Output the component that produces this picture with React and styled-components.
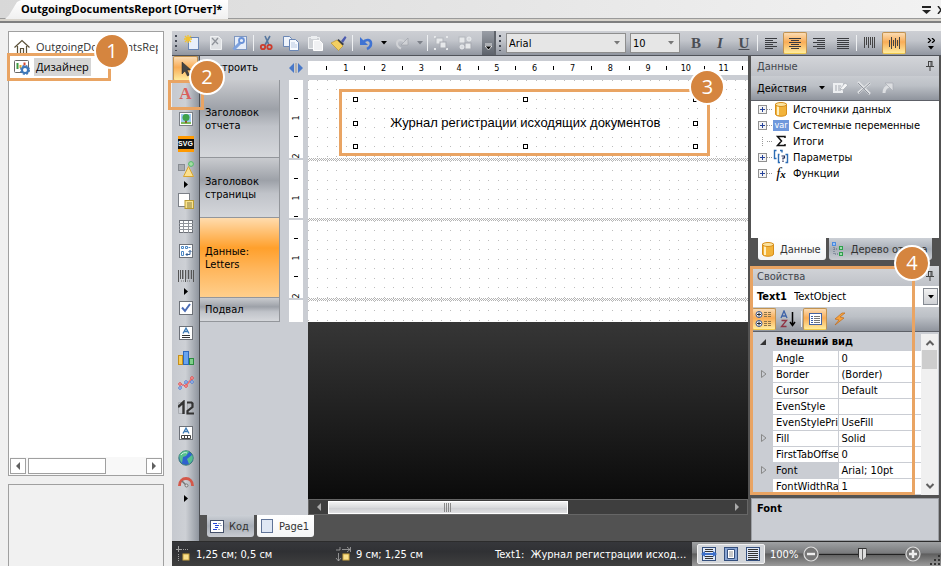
import styled, { createGlobalStyle, css } from "styled-components";

const orange = "#e9a463";
const chrome = "#cacdd3";

const GlobalStyle = createGlobalStyle`
  * {
    box-sizing: border-box;
  }
  body {
    margin: 0;
    background: #f0f0f0;
    color: #000;
    font-family: "DejaVu Sans Condensed", Tahoma, sans-serif;
    font-size: 11px;
    line-height: 13px;
  }
  button, select, input {
    font: inherit;
    color: inherit;
    margin: 0;
  }
  button {
    padding: 0;
    border: 0;
    background: none;
  }
  ul {
    list-style: none;
    margin: 0;
    padding: 0;
  }
  svg {
    display: block;
    flex: none;
  }
`;

const Icon = ({ w = 16, h = 16, children }) => (
  <svg width={w} height={h} viewBox={`0 0 ${w} ${h}`} fill="none" aria-hidden="true">
    {children}
  </svg>
);

/* ---------- icons ---------- */

const DropArrow = ({ color = "#000" }) => (
  <Icon w={6} h={4}>
    <path d="M0 0h6L3 3.500z" fill={color} />
  </Icon>
);
const RightArrow = () => (
  <Icon w={4} h={7}>
    <path d="M0 0l4 3.500L0 7z" fill="#000" />
  </Icon>
);
const NewIcon = () => (
  <Icon>
    <rect x="4.500" y="2.500" width="10" height="12" fill="#e9effa" stroke="#6b87b5" />
    <path d="M4 0v8M0 4h8M1 1l6 6M7 1L1 7" stroke="#f2c230" strokeWidth="1.300" />
  </Icon>
);
const DeletePageIcon = () => (
  <Icon>
    <path d="M2.500 1.500h8l3 3v10h-11z" fill="#dfe1e4" stroke="#eef0f2" />
    <path d="M4 3l6 6M10 3l-6 7" stroke="#8f939a" strokeWidth="1.300" />
  </Icon>
);
const WrenchIcon = () => (
  <Icon>
    <rect x="2.500" y="1.500" width="12" height="13" fill="#e6edf8" stroke="#7f97c0" />
    <path d="M1.500 14.500L8 8" stroke="#7da2df" strokeWidth="3" />
    <circle cx="9.500" cy="5.500" r="2.500" stroke="#6a92d8" strokeWidth="1.800" />
  </Icon>
);
const CutIcon = () => (
  <Icon>
    <path d="M11 1L6 10M6 1l4 9" stroke="#56779f" strokeWidth="1.600" />
    <circle cx="4" cy="12" r="2.200" stroke="#cc3b2c" strokeWidth="1.800" />
    <circle cx="10.500" cy="12" r="2.200" stroke="#cc3b2c" strokeWidth="1.800" />
  </Icon>
);
const CopyIcon = () => (
  <Icon>
    <path d="M.5 1.500h6l2 2v8h-8z" fill="#eef3fb" stroke="#6b87b5" />
    <path d="M6.500 4.500h6l3 3v8h-9z" fill="#f6f9fe" stroke="#6b87b5" />
    <path d="M8 8h4M8 10h6M8 12h6" stroke="#b9c9e2" />
  </Icon>
);
const PasteIcon = () => (
  <Icon>
    <path d="M1.500 2.500h11v11h-11z" fill="#cfd2d6" stroke="#eceef0" />
    <rect x="4" y="1" width="6" height="3" fill="#eceef0" />
    <path d="M6.500 5.500h6l3 3v7h-9z" fill="#f0f1f3" stroke="#fff" />
  </Icon>
);
const BrushIcon = () => (
  <Icon>
    <path d="M10 6l4-5 1.500 1.500L12 8z" fill="#4d5bb0" />
    <path d="M7.500 4l5.500 5-1.500 1.500-5.500-5z" fill="#3b3f4a" />
    <path d="M6 5l6 6-4.500 4.500L0 8z" fill="#f3cf62" stroke="#b58c22" strokeWidth=".6" />
  </Icon>
);
const UndoIcon = () => (
  <Icon>
    <path d="M5 7.500c3-4 8-3 8 1 0 3-2 4.500-4 5.500" stroke="#3f73d3" strokeWidth="2.600" />
    <path d="M2 2v8h8z" fill="#3f73d3" />
  </Icon>
);
const RedoIcon = () => (
  <Icon>
    <path d="M11 7.500c-3-4-8-3-8 1 0 3 2 4 4 5" stroke="#d0d2d6" strokeWidth="2" />
    <path d="M14 3v7H7z" fill="#d0d2d6" stroke="#9a9ea6" strokeWidth=".6" />
  </Icon>
);
const GroupIcon = () => (
  <Icon>
    <path d="M1 1h2v2H1zM13 1h2v2h-2zM1 13h2v2H1zM13 13h2v2h-2z" fill="#e6e8ea" />
    <rect x="3" y="3" width="7" height="6" fill="#e6e8ea" stroke="#b4b7bd" />
    <rect x="7" y="7" width="6" height="6" fill="#e6e8ea" stroke="#a5a8af" />
  </Icon>
);
const UngroupIcon = () => (
  <Icon>
    <rect x="2" y="2" width="6" height="6" fill="#e6e8ea" stroke="#b4b7bd" />
    <rect x="8" y="8" width="6" height="6" fill="#e6e8ea" stroke="#a5a8af" />
    <circle cx="12" cy="4" r="2" fill="#d9dbdf" stroke="#ebedef" />
    <circle cx="5" cy="12" r="2" fill="#d9dbdf" stroke="#ebedef" />
  </Icon>
);
const alignLines = {
  left: ["M1 2.500h12M1 6.500h12M1 10.500h12", "M1 4.500h8M1 8.500h8M1 12.500h8"],
  center: ["M1 2.500h12M1 6.500h12M1 10.500h12", "M3 4.500h8M3 8.500h8M3 12.500h8"],
  right: ["M1 2.500h12M1 6.500h12M1 10.500h12", "M5 4.500h8M5 8.500h8M5 12.500h8"],
  full: ["M1 2.500h12M1 6.500h12M1 10.500h12", "M1 4.500h12M1 8.500h12M1 12.500h12"],
};
const AlignIcon = ({ kind }) => (
  <Icon w={14} h={14}>
    <path d={alignLines[kind].join("")} stroke="#3a3c40" />
  </Icon>
);
const VerticalIcon = ({ middle }) => (
  <Icon w={14} h={14}>
    <path
      d={
        middle
          ? "M2.500 4v7M4.500 1v12M6.500 4v6M8.500 2v10M10.500 4v6M12.500 1v12"
          : "M1.500 1v11M3.500 1v8M5.500 1v11M7.500 1v8M9.500 1v11M11.500 1v11"
      }
      stroke="#444"
    />
  </Icon>
);
const CursorIcon = () => (
  <Icon>
    <path d="M4 1v12l3-3 2.500 5 2-1-2.500-5h4z" fill="#444" stroke="#222" strokeWidth=".5" />
  </Icon>
);
const PictureIcon = () => (
  <Icon>
    <rect x="1.500" y="1.500" width="13" height="13" fill="#fff" stroke="#7c8087" />
    <rect x="3" y="3" width="10" height="10" fill="#9fc9f0" />
    <path d="M3 11h10v2H3z" fill="#7cba57" />
    <path d="M7 9h2v3H7z" fill="#8a5a2c" />
    <circle cx="8" cy="6.500" r="3.500" fill="#3fa24a" />
  </Icon>
);
const ShapesIcon = () => (
  <Icon>
    <rect x="0.500" y="3.500" width="6" height="6" fill="#a9acb1" stroke="#888c92" />
    <circle cx="13" cy="3" r="2.400" fill="#a3dfa3" stroke="#54b86a" />
    <path d="M10.500 5.500l5 10h-10z" fill="#fbe08e" stroke="#d8a530" />
  </Icon>
);
const SubreportIcon = () => (
  <Icon>
    <rect x=".5" y=".5" width="11" height="13" fill="#fff" stroke="#7c8087" />
    <rect x="7" y="7.500" width="8.500" height="8" fill="#fbe48d" stroke="#b99b35" />
    <path d="M9 10h5M9 12h5M9 14h5" stroke="#6f6230" strokeWidth=".8" />
  </Icon>
);
const TableIcon = () => (
  <Icon>
    <rect x="1.500" y="2.500" width="13" height="12" fill="#fff" stroke="#6d7178" />
    <path d="M1 5.500h14M1 8.500h14M1 11.500h14M5.500 3v12M10.500 3v12" stroke="#90949a" />
  </Icon>
);
const CrossTabIcon = () => (
  <Icon>
    <rect x="1.500" y="1.500" width="13" height="13" fill="#fff" stroke="#6d7178" />
    <path d="M3.500 3.500h2v2h-2zM7.500 3.500h2v2h-2zM10.500 4.500h2M3.500 8.500h2v4h-2z" stroke="#4a86c4" />
    <path d="M8 11.500h4v-4M10.500 9l1.500-1.500L13.500 9M9.500 10L8 11.500 9.500 13" stroke="#355f93" />
  </Icon>
);
const BarcodeIcon = () => (
  <Icon>
    <path d="M.5 2v12M2.500 2v9M4.500 2v9M7.500 2v12M10.500 2v9M13.500 2v9M15.500 2v12" stroke="#555" />
    <path d="M5.500 2v9M9 2v9M12 2v9" stroke="#83868c" strokeWidth=".8" />
    <path d="M3 13h3M9 13h4" stroke="#777" strokeDasharray="1 1" />
  </Icon>
);
const CheckIcon = () => (
  <Icon>
    <rect x="1.500" y="1.500" width="13" height="13" fill="#fff" stroke="#6d7178" />
    <path d="M4 7.500l3 3.500 5-7" stroke="#4a6bb5" strokeWidth="2" />
  </Icon>
);
const RichTextIcon = ({ cells }) => (
  <Icon>
    <rect x="1.500" y="1.500" width="13" height="13" fill="#fff" stroke="#6d7178" />
    <path d="M5 8.500l3-5.500 3 5.500M6 6.500h4" stroke="#3c79b4" strokeWidth="1.300" />
    {cells ? (
      <path d="M3.500 10.500h9v3h-9zM6.500 10.500v3M9.500 10.500v3" stroke="#444" />
    ) : (
      <path d="M4 10.500h8M4 12.500h8" stroke="#333" />
    )}
  </Icon>
);
const ChartIcon = () => (
  <Icon>
    <rect x=".5" y="5.500" width="4" height="9" fill="#f7cd58" stroke="#c58f1b" />
    <rect x="5.500" y="1.500" width="5" height="13" fill="#69a4ee" stroke="#2e68bd" />
    <rect x="11.500" y="8.500" width="4" height="6" fill="#7fcf8a" stroke="#2b8b40" />
  </Icon>
);
const SparkIcon = () => (
  <Icon>
    <path d="M2 13l6-6 6 0" stroke="#7b9bdc" />
    <path d="M2 9l6 2 6-8" stroke="#ee6d6d" strokeWidth="1.300" />
    <g fill="#e8f0ff" stroke="#4a78cf">
      <circle cx="2" cy="13" r="1.300" />
      <circle cx="8" cy="7" r="1.300" />
      <circle cx="14" cy="7" r="1.300" />
    </g>
    <g fill="#ffdada" stroke="#e04444">
      <circle cx="2" cy="9" r="1.300" />
      <circle cx="8" cy="11" r="1.300" />
      <circle cx="14" cy="3" r="1.300" />
    </g>
  </Icon>
);
const DigitsIcon = () => (
  <Icon>
    <path d="M.5 2.500h5v11h-5zM9.500 2.500h5v11h-5z" stroke="#a9acb1" />
    <path d="M0 7l5.500-5v12" stroke="#333" strokeWidth="2.400" />
    <path d="M9 2.500h4.500l1 1V7L9.500 11v2.500H16" stroke="#333" strokeWidth="2.200" />
  </Icon>
);
const GlobeIcon = () => (
  <Icon>
    <circle cx="8" cy="8" r="7.200" fill="#2f62cf" stroke="#3c7d74" />
    <path d="M2 4c3-4 8-4 9-2L8 6l-3 1-1 6C1 10 1 6 2 4zM9 9l5-4c2 4 0 7-3 9z" fill="#57c08d" />
    <path d="M3 5c1-2 4-3 6-2" stroke="#d2f2ea" />
  </Icon>
);
const GaugeIcon = () => (
  <Icon>
    <path d="M1.500 11C1 1 15 1 14.500 11" stroke="#d3584a" strokeWidth="2.800" />
    <path d="M4 6l5 5" stroke="#777" strokeWidth="1.500" />
    <circle cx="8.500" cy="10.500" r="1.500" fill="#ddd" stroke="#777" />
  </Icon>
);
const HomeIcon = () => (
  <Icon>
    <path d="M.5 8.500L8 1.500l7.500 7M3.500 7v7.500h3v-5h3v5h3V7" stroke="#5b5138" strokeWidth="1.200" />
  </Icon>
);
const DesignerIcon = () => (
  <Icon>
    <rect x=".5" y="1.500" width="14" height="12" rx="1" fill="#fff" stroke="#666" />
    <path d="M3.500 4v6" stroke="#3f9b43" strokeWidth="2" />
    <path d="M6.500 6v3" stroke="#e8a92d" strokeWidth="2" />
    <path d="M10.500 3.500v3" stroke="#d6492f" strokeWidth="2" />
    <circle cx="11" cy="11" r="3" stroke="#3d77b8" strokeWidth="2" fill="#fff" />
    <circle cx="11" cy="11" r="4.300" stroke="#3d77b8" strokeWidth="1.400" strokeDasharray="2 1.400" />
  </Icon>
);
const PinIcon = () => (
  <Icon w={8} h={10}>
    <path d="M2 .5h4M2.500 0v5M5 0v5M6 0v5M0 5.500h8M4 6v4" stroke="#444" />
  </Icon>
);
const DatabaseIcon = () => (
  <Icon>
    <path d="M2.500 3v10c0 3 11 3 11 0V3z" fill="#f2b33a" stroke="#d78e1a" />
    <path d="M5 5v9" stroke="#fff0c0" strokeWidth="2" />
    <ellipse cx="8" cy="3.500" rx="5.500" ry="2" fill="#fbe3a0" stroke="#d78e1a" />
  </Icon>
);
const SigmaIcon = () => (
  <Icon>
    <path d="M12 5V3.500H4.500l4 4.500-4 4.500H12V11" stroke="#111" strokeWidth="1.500" />
  </Icon>
);
const ParamIcon = () => (
  <Icon>
    <path d="M3.500 1.500h-2v8h2M7 1.500h2v2" stroke="#2d6db5" strokeWidth="1.400" />
    <path d="M6.500 5.500h-1v8h1.500M12.500 5.500h2v8h-2" stroke="#2d6db5" strokeWidth="1.400" />
    <path d="M8.500 7h3v2h-1.500v1.500M10 11.500v1.500" stroke="#222a55" strokeWidth="1.200" />
  </Icon>
);
const TreeIcon = () => (
  <Icon>
    <rect x="1.500" y="1.500" width="3" height="3" fill="#9cc3f5" stroke="#4b8be0" />
    <path d="M3 6v7h4M3 8h4" stroke="#5b6a80" strokeDasharray="1 1" />
    <rect x="8.500" y="5.500" width="3" height="3" fill="#9fdcae" stroke="#2fa04c" />
    <rect x="8.500" y="11.500" width="3" height="3" fill="#9fdcae" stroke="#2fa04c" />
  </Icon>
);
const EditIcon = () => (
  <Icon>
    <path d="M1 3h10v10H1z" fill="#edeff1" />
    <path d="M3 6h2M3 8h2M3 10h2M6 6h3M6 8h2M6 10h3" stroke="#a6aab1" />
    <path d="M8 9l5-6 3 2-5 5z" fill="#f4f5f6" stroke="#a6aab1" strokeWidth=".7" />
  </Icon>
);
const CrossIcon = () => (
  <Icon>
    <path d="M2 2l12 12M14 3L2 13" stroke="#dfe1e4" strokeWidth="2.500" />
    <path d="M2 3l11 11M14 3L3 13" stroke="#91959d" />
  </Icon>
);
const LinkIcon = () => (
  <Icon>
    <path d="M4 13c0-4 2-6 5-7" stroke="#dcdee1" strokeWidth="3" />
    <path d="M5 3h8v8z" fill="#dcdee1" stroke="#a6aab1" strokeWidth=".7" />
  </Icon>
);
const CategoryIcon = () => (
  <Icon w={18} h={18}>
    <circle cx="4" cy="4.500" r="3" fill="#fff" stroke="#39558d" />
    <circle cx="4" cy="13.500" r="3" fill="#fff" stroke="#39558d" />
    <path d="M2 4.500h4M4 2.500v4M2 13.500h4M4 11.500v4" stroke="#222" />
    <path d="M9 2.500h8M9 4.500h8M9 6.500h8M9 11.500h8M9 13.500h8M9 15.500h8" stroke="#8b744a" strokeDasharray="3 1" />
  </Icon>
);
const SortIcon = () => (
  <Icon w={18} h={18}>
    <path d="M2 8l3-7 3 7M3 6h4" stroke="#3d62a8" strokeWidth="1.300" />
    <path d="M2.500 10.500h5l-5 6h5" stroke="#8f3344" strokeWidth="1.300" />
    <path d="M13.500 2v13M11 12l2.500 3.500L16 12" stroke="#000" strokeWidth="1.500" />
  </Icon>
);
const SheetIcon = () => (
  <Icon>
    <rect x="2.500" y="2.500" width="12" height="11" fill="#fff" stroke="#4664a2" />
    <path d="M4 5.500h2M4 7.500h2M4 9.500h2M4 11.500h2" stroke="#3c5ea8" />
    <path d="M7 5.500h6M7 7.500h6M7 9.500h6M7 11.500h6" stroke="#777" />
  </Icon>
);
const BoltIcon = () => (
  <Icon>
    <path d="M11 2L4 8l4 1-4 5 9-7-4-1 5-4z" fill="#f8a33b" stroke="#c06a1c" strokeWidth=".7" />
  </Icon>
);
const CodeIcon = () => (
  <Icon>
    <rect x="1.500" y="2.500" width="13" height="12" fill="#fff" stroke="#44506a" />
    <path d="M4 5.500h4M6 7.500h4M6 9.500h3M4 11.500h4" stroke="#2445d8" strokeWidth="1.200" />
    <path d="M9 5.500h3M11 7.500h2M9 11.500h2" stroke="#9aa5bb" />
  </Icon>
);
const PageIcon = () => (
  <Icon>
    <rect x="2.500" y="1.500" width="11" height="13" fill="#dfe7f4" stroke="#5f7397" />
  </Icon>
);
const PositionIcon = ({ size }) => (
  <Icon w={16} h={16}>
    {size ? (
      <path d="M1 4h4M5 1v3M7 3.500h8M12 1l3 2.500L12 6M15.500 1v5M3.500 7v8M1 12l2.500 3L6 12" stroke="#a8a8a8" strokeWidth=".8" />
    ) : (
      <path d="M3.500 0v6M1 3.500h6M8 3.500h1M10 3.500h1M12 3.500h1M3.500 8v1M3.500 10v1M3.500 12v1M3.500 14v1" stroke="#a0a0a0" />
    )}
    <rect x="8" y="8" width="6" height="6" fill="#f9e08c" stroke="#c9a43e" />
  </Icon>
);
const ViewIcon = ({ kind }) => (
  <Icon>
    <rect x="1.500" y="1.500" width="13" height="13" fill="#dfe8f6" stroke="#35507e" />
    {kind === "width" && (
      <>
        <path d="M4 3.500h8M4 5.500h8M4 10.500h8M4 12.500h8" stroke="#333" />
        <path d="M0 8l4-3v2h8V5l4 3-4 3V9H4v2z" fill="#3d6fc9" />
      </>
    )}
    {kind === "page" && (
      <>
        <path d="M2 2h12v12H2z" fill="#8ba6d3" />
        <path d="M4.500 3.500h7v9h-7z" fill="#fff" stroke="#35507e" />
        <path d="M6 6h4M6 8h4M6 10h4" stroke="#777" strokeWidth=".8" />
      </>
    )}
    {kind === "full" && <path d="M3 3.500h10M3 5.500h10M3 7.500h10M3 9.500h10M3 11.500h10M3 13.500h10" stroke="#333" />}
  </Icon>
);
const ZoomIcon = ({ plus }) => (
  <Icon>
    <circle cx="8" cy="8" r="7" fill="#777" stroke="#ddd" strokeWidth="1.200" />
    <path d={plus ? "M4 8h8M8 4v8" : "M4 8h8"} stroke="#eee" strokeWidth="2.400" />
  </Icon>
);
const SplitIcon = () => (
  <Icon w={14} h={12}>
    <path d="M5 1v10L0 6zM9 1v10l5-5z" fill="#4878c8" />
    <path d="M7 1v10" stroke="#9c9388" />
  </Icon>
);
const ScrollArrow = ({ dir, color = "#606060" }) => (
  <Icon w={10} h={10}>
    {dir === "left" && <path d="M7 1v8L3 5z" fill={color} />}
    {dir === "right" && <path d="M3 1v8l4-4z" fill={color} />}
    {dir === "up" && <path d="M1.500 7L5 3.500 8.500 7" stroke={color} strokeWidth="2" />}
    {dir === "down" && <path d="M1.500 3L5 6.500 8.500 3" stroke={color} strokeWidth="2" />}
  </Icon>
);
const ExpandIcon = ({ open }) => (
  <Icon w={7} h={8}>
    {open ? <path d="M6 1v6H0z" fill="#333" /> : <path d="M1.500 .5L6 4 1.500 7.500z" stroke="#888" />}
  </Icon>
);

/* ---------- shared parts ---------- */

const hot = css`
  background: linear-gradient(#fbdcb4, #f9ad57 45%, #fbc877 70%, #ffec9c);
  border: 1px solid #c29350;
  border-bottom-color: #efc84e;
  border-radius: 2px;
`;

const ToolButton = styled.button`
  display: flex;
  flex: none;
  align-items: center;
  justify-content: center;
  width: ${({ $narrow }) => ($narrow ? 12 : 24)}px;
  height: 22px;
  ${({ $active }) => $active && hot}
`;

const Callout = styled.div`
  position: absolute;
  z-index: 3;
  inset: ${({ $inset }) => $inset};
  height: ${({ $height }) => ($height ? `${$height}px` : "auto")};
  border: 3px solid ${orange};
  pointer-events: none;
`;

const Badge = styled.span`
  position: absolute;
  top: ${({ $top }) => $top}px;
  right: ${({ $right }) => $right}px;
  width: 36px;
  height: 36px;
  border: 2px solid #fff;
  border-radius: 50%;
  background: #d5853f;
  color: #fff;
  font: 20px/31px "Open Sans", sans-serif;
  text-align: center;
`;

const Page = styled.div`
  display: flex;
  flex-direction: column;
  min-height: 100vh;
  overflow: hidden;
`;

/* ---------- title ---------- */

const TitleBar = styled.header`
  display: flex;
  justify-content: space-between;
  height: 23px;
  padding-left: 5px;
  background: linear-gradient(90deg, #d8d8d8, #f2f2f2);
  border-bottom: 2px solid #808080;
  box-shadow: inset 0 -2px #d8d4cc, inset 0 -3px #9a9a9a;
`;

const TitleTab = styled.h1`
  margin: 0;
  padding: 0 6px 0 16px;
  height: 19px;
  background: linear-gradient(#fff, #f0f0f0);
  clip-path: polygon(0 100%, 4px 80%, 12px 10%, 16px 0, 100% 0, 100% 100%);
  font: bold 11px/18px "Open Sans", sans-serif;
`;

const TitleTools = styled.div`
  display: flex;
  align-items: center;
  gap: 6px;
  height: 20px;
`;

/* ---------- sidebar ---------- */

const Body = styled.div`
  display: flex;
  flex: 1;
  padding-top: 8px;
`;

const Sidebar = styled.aside`
  position: relative;
  display: flex;
  flex-direction: column;
  gap: 8px;
  width: 172px;
  padding: 0 8px;
  font: 11px/18px "Open Sans", sans-serif;
`;

const Panel = styled.nav`
  display: flex;
  flex-direction: column;
  justify-content: space-between;
  height: 445px;
  padding: 5px 1px 0;
  background: #fff;
  border: 1px solid #a0a0a0;
`;

const EmptyPanel = styled.div`
  flex: 1;
  background: #f1f1f1;
  border: 1px solid #a0a0a0;
  border-bottom: 0;
`;

const NavItem = styled.li`
  display: flex;
  align-items: center;
  gap: 4px;
  height: 20px;
  margin: 0 4px;
  overflow: hidden;
`;

const NavLink = styled.a`
  padding: 0 2px;
  color: ${({ $current }) => ($current ? "#000" : "#333")};
  background: ${({ $current }) => ($current ? "#d5d5d5" : "none")};
  text-decoration: none;
`;

const SideScroll = styled.div`
  display: flex;
  height: 18px;
  padding: 1px 0;
  background: #f8f8f8;
  gap: 2px;
`;

const SideScrollButton = styled.button`
  display: flex;
  align-items: center;
  justify-content: center;
  width: 16px;
  border: 1px solid #a0a0a0;
  background: #fff;
`;

const SideThumb = styled.div`
  width: 78px;
  margin-right: auto;
  border: 1px solid #a0a0a0;
  background: #fff;
`;

/* ---------- designer ---------- */

const Designer = styled.main`
  display: flex;
  flex: 1;
  flex-direction: column;
  min-width: 0;
  background: #525252;
`;

const ToolbarRow = styled.div`
  display: flex;
  gap: 2px;
  height: 25px;
  background: #60646b;
  border-bottom: 1px solid #50535a;
`;

const Toolbar = styled.div`
  display: flex;
  align-items: center;
  flex: ${({ $grow }) => ($grow ? 1 : "none")};
  min-width: 0;
  padding-left: 3px;
  background: linear-gradient(#cdcfd4, #c2c5cb 40%, #9196a0);
`;

const Grip = styled.span`
  flex: none;
  width: 2px;
  height: 16px;
  margin-right: ${({ $gap }) => $gap}px;
  background: repeating-linear-gradient(#454a55 0 2px, transparent 2px 5px);
`;

const Separator = styled.span`
  flex: none;
  width: 1px;
  height: 16px;
  margin: 0 1px;
  background: #eef0f2;
`;

const Overflow = styled.button`
  display: flex;
  flex-direction: column;
  align-items: center;
  justify-content: flex-end;
  gap: 3px;
  width: ${({ $dark }) => ($dark ? 12 : 20)}px;
  height: 24px;
  margin-left: ${({ $dark }) => ($dark ? "5px" : "auto")};
  padding-bottom: 5px;
  background: ${({ $dark }) => ($dark ? "linear-gradient(#9a9ea6, #5d626b)" : "none")};
`;

const SelectBox = styled.span`
  position: relative;
  display: flex;
  flex: none;
  align-items: center;
  width: ${({ $width }) => $width}px;
  height: 20px;
  margin-right: 4px;
  background: #e6e6e6;
  border: 1px solid #8e8e8e;

  select {
    appearance: none;
    flex: 1;
    padding: 0 2px;
    border: 0;
    background: none;
  }
  svg {
    position: absolute;
    right: 5px;
    pointer-events: none;
  }
`;

const Letter = styled.span`
  font: bold 15px/18px "Liberation Serif", serif;
  color: #4b4e55;
  font-style: ${({ $italic }) => ($italic ? "italic" : "normal")};
  text-decoration: ${({ $underline }) => ($underline ? "underline" : "none")};
`;

const Workspace = styled.div`
  display: flex;
  flex: 1;
`;

const Tools = styled.div`
  position: relative;
  z-index: 2;
  display: flex;
  flex-direction: column;
  width: 28px;
  padding: 0 1px;
  background: linear-gradient(90deg, #c6c9cf, #cdd0d5 50%, #8f959e);
  border-right: 1px solid #4d4f54;
`;

const Tool = styled.button`
  display: flex;
  align-items: center;
  justify-content: center;
  width: 25px;
  height: 25px;
  ${({ $active }) => $active && hot}
`;

const ToolMore = styled.span`
  display: flex;
  justify-content: center;
  height: 7px;
`;

const TextToolGlyph = styled.span`
  font: bold 17px/20px "Liberation Serif", serif;
  color: #d9605c;
`;

const SvgGlyph = styled.span`
  width: 16px;
  height: 16px;
  background: linear-gradient(#f90 3px, #111 3px 13px, #f90 13px);
  color: #fff;
  font: bold 7px/16px "Liberation Sans", sans-serif;
  text-align: center;
`;

const Editor = styled.section`
  display: flex;
  flex: 1;
  flex-direction: column;
  min-width: 0;
`;

const EditorRow = styled.div`
  display: grid;
  flex: ${({ $grow }) => ($grow ? 1 : "none")};
  grid-template-columns: 80px 28px minmax(0, 1fr);
  height: ${({ $height }) => ($height ? `${$height}px` : "auto")};
  background: ${chrome};
`;

const BuildLabel = styled.span`
  padding: 5px 3px;
`;

const SplitHandle = styled.span`
  padding: 6px 9px;
`;

const Ruler = styled.div`
  display: flex;
  height: 14px;
  margin: 5px 0;
  overflow: hidden;
  background: #fff;
  font-size: 9px;
  line-height: 14px;
`;

const RulerCell = styled.span`
  display: flex;
  flex: none;
  justify-content: flex-end;
  align-items: center;
  width: 1cm;
  background: linear-gradient(#000, #000) center / 1px 4px no-repeat;

  span {
    width: 16px;
    margin-right: -8px;
    text-align: center;
  }
`;

const SideRuler = styled.div`
  margin: ${({ $first }) => ($first ? 0 : 2)}px 5px 0 9px;
  overflow: hidden;
  background: #fff;
  font-size: 9px;
  line-height: 14px;
`;

const SideCell = styled.span`
  display: flex;
  align-items: flex-end;
  height: 1cm;
  background: linear-gradient(#000, #000) center / 4px 1px no-repeat;

  span {
    width: 14px;
    height: 14px;
    margin-bottom: -7px;
    text-align: center;
    transform: rotate(-90deg);
  }
`;

const BandHead = styled.div`
  display: flex;
  align-items: center;
  padding: 0 5px;
  border-right: 1px solid #93969b;
  border-bottom: 1px solid #93969b;
  background: ${({ $active }) =>
    $active
      ? "linear-gradient(#ffdcae, #ffa02c 38%, #ffb65c 65%, #ffcf8c)"
      : "linear-gradient(#c9cbcf, #9da1a8 38%, #c0c3c9 60%, #d5d7db)"};
`;

const BandSheet = styled.div`
  position: relative;
  background: #fff;
  border-top: ${({ $first }) => ($first ? 0 : 3)}px solid transparent;
  background-clip: padding-box;
`;

const Hatch = styled.i`
  position: absolute;
  inset: -3px 0 auto;
  height: 3px;
  background: repeating-conic-gradient(#b4b4b4 0 25%, #fff 0 50%) 0 0 / 2px 2px;
`;

const Dots = styled.svg`
  position: absolute;
  inset: 0;
  width: 100%;
  height: 100%;
`;

/* placed in report units, the same ones the status bar shows */
const TextObject = styled.div`
  position: absolute;
  z-index: 2;
  left: 1.25cm;
  top: 0.5cm;
  display: flex;
  align-items: center;
  justify-content: center;
  width: 9cm;
  height: 1.25cm;
  font: 13px/16px "Liberation Sans", Arial, sans-serif;
  white-space: nowrap;
`;

const Handle = styled.i`
  position: absolute;
  left: ${({ $x }) => $x}%;
  top: ${({ $y }) => $y}%;
  width: 5px;
  height: 5px;
  margin: -2px;
  border: 1px solid #000;
  background: #fff;
`;

const Backdrop = styled.div`
  background: linear-gradient(#363636, #0b0b0b);
`;

const HScroll = styled.div`
  display: flex;
  align-items: center;
  justify-content: space-between;
  padding: 0 5px;
  background: #3e3e3e;
  border: 1px solid #666;
`;

const HThumb = styled.div`
  display: flex;
  align-items: center;
  justify-content: center;
  width: 56%;
  height: 13px;
  margin: 0 auto 0 4px;
  background: linear-gradient(#f2f2f2, #d9dadc 50%, #cccdd0 50%, #e0e0e2);
  border: 1px solid #fff;

  i {
    width: 8px;
    height: 9px;
    background: repeating-linear-gradient(90deg, #888 0 1px, transparent 1px 2px);
  }
`;

const TabStrip = styled.div`
  display: flex;
  gap: 3px;
  height: ${({ $height }) => $height}px;
  padding-left: 7px;
`;

const Tab = styled.button`
  display: flex;
  align-items: center;
  gap: 4px;
  height: 22px;
  padding: 0 5px 0 2px;
  border-radius: 0 0 3px 3px;
  color: #333;
  white-space: nowrap;
  background: ${({ $active }) => ($active ? "linear-gradient(#fff, #f4f5f6)" : "linear-gradient(#ccd0d6, #a9afb8 50%, #c9ccd2)")};
`;

/* ---------- right panes ---------- */

const Panes = styled.aside`
  display: flex;
  flex-direction: column;
  width: 193px;
  padding: 0 2px 0 3px;
`;

const PaneHeader = styled.h2`
  display: flex;
  align-items: center;
  justify-content: space-between;
  height: 20px;
  margin: 0;
  padding: 0 5px 0 6px;
  font-size: 11px;
  font-weight: normal;
  color: #41454d;
  background: linear-gradient(#d3d5d9, #bfc2c8);
`;

const PaneToolbar = styled.div`
  display: flex;
  align-items: center;
  height: 25px;
  padding-left: ${({ $text }) => ($text ? 6 : 1)}px;
  background: linear-gradient(#c9ccd1, #bcc0c6 40%, #8f949d);
  border-bottom: 1px solid #5d6067;
`;

const ActionButton = styled.button`
  display: flex;
  align-items: center;
  gap: 12px;
  margin-right: 3px;
`;

const Tree = styled.ul`
  height: 137px;
  padding: 0 7px;
  background: #fff;
`;

const TreeItem = styled.li`
  display: flex;
  align-items: center;
  height: 16px;
  white-space: nowrap;

  svg,
  b {
    margin-right: 4px;
  }
`;

const Twist = styled.button`
  flex: none;
  width: 9px;
  height: 9px;
  background: ${({ $leaf }) =>
    $leaf
      ? "repeating-linear-gradient(#999 0 1px, transparent 1px 2px) 4px 0 / 1px 9px no-repeat"
      : "linear-gradient(#26439a, #26439a) center / 5px 1px no-repeat, linear-gradient(#26439a, #26439a) center / 1px 5px no-repeat, #f4f4f4"};
  border: ${({ $leaf }) => ($leaf ? 0 : "1px solid #919191")};
`;

const Leader = styled.i`
  width: 6px;
  height: 1px;
  background: repeating-linear-gradient(90deg, #999 0 1px, transparent 1px 2px);
`;

const VarGlyph = styled.b`
  width: 16px;
  height: 11px;
  background: #6f98dc;
  color: #fff;
  font: 9px/10px "DejaVu Sans Condensed", sans-serif;
  text-align: center;
`;

const FxGlyph = styled.b`
  width: 16px;
  font: italic 15px/14px "Liberation Serif", serif;
  text-align: center;

  small {
    font-size: 11px;
    font-weight: bold;
  }
`;

const Properties = styled.section`
  position: relative;
  z-index: 2;
  display: flex;
  flex: 1;
  flex-direction: column;
`;

const ObjectPicker = styled.div`
  position: relative;
  display: flex;
  align-items: center;
  height: 21px;
  padding: 0 2px 0 6px;
  background: #fff;

  label {
    font-weight: bold;
  }
  select {
    appearance: none;
    flex: 1;
    margin-left: 7px;
    padding: 0;
    border: 0;
    background: none;
  }
`;

const PickerArrow = styled.span`
  position: absolute;
  right: 1px;
  display: flex;
  align-items: center;
  justify-content: center;
  width: 15px;
  height: 17px;
  border: 1px solid #858a92;
  background: linear-gradient(#f2f2f2, #cfd1d5);
  pointer-events: none;
`;

const GridBox = styled.div`
  display: grid;
  grid-template-columns: minmax(0, 1fr) 17px;
  padding: 2px 1px 0;
  background: ${chrome};
`;

const PropTable = styled.table`
  width: 100%;
  table-layout: fixed;
  border-collapse: collapse;
  background: #fff;

  td,
  th {
    height: 16px;
    padding: 0 0 0 3px;
    overflow: hidden;
    font-weight: normal;
    text-align: left;
    line-height: 15px;
    white-space: nowrap;
    border-bottom: 1px solid ${chrome};
  }
  td:first-child {
    padding-left: 8px;
    background: ${chrome};
  }
  th {
    border-right: 1px solid ${chrome};
  }
`;

const PropRow = styled.tr`
  th {
    background: ${({ $selected }) => ($selected ? chrome : "#fff")};
  }
`;

const CategoryRow = styled.tr`
  background: ${chrome};

  && th {
    border-right: 0;
    font-weight: bold;
  }
`;

const VScroll = styled.div`
  display: flex;
  flex-direction: column;
  align-items: center;
  justify-content: space-between;
  padding: 4px 0;
  background: #f0f0f0;
`;

const VThumb = styled.i`
  width: 15px;
  height: 19px;
  margin: 2px 0 auto;
  background: #cdcdcd;
`;

const Description = styled.div`
  flex: 1;
  margin-top: 3px;
  padding: 3px 5px;
  font-weight: bold;
  background: ${chrome};
  border: 1px solid #9da0a5;
`;

/* ---------- status ---------- */

const StatusBar = styled.footer`
  display: flex;
  height: 25px;
  border-top: 1px solid #2c2c2c;
  background: linear-gradient(#36373b, #303134 40%, #3f3f3f);
  color: #fff;
`;

const StatusText = styled.span`
  display: flex;
  align-items: center;
  gap: 5px;
  flex: none;
  width: 160px;
  padding-left: 3px;
  white-space: nowrap;
`;

const StatusObject = styled.span`
  flex: 1;
  padding: 6px 3px;
  overflow: hidden;
  text-overflow: ellipsis;
  white-space: pre;
`;

const StatusTools = styled.div`
  display: flex;
  align-items: center;
  flex: none;
  width: 249px;
  padding-left: 5px;
  background: linear-gradient(#9fa1a3, #7a7b7d 45%, #5e5e5e 50%, #9b9b9b);
`;

const ViewGroup = styled.div`
  display: flex;
  margin-right: 5px;
  border: 1px solid #f2f2f2;
  border-radius: 2px;
  background: #d3d6da;

  button {
    display: flex;
    align-items: center;
    justify-content: center;
    width: 22px;
    height: 18px;
  }
`;

const ZoomRange = styled.input`
  appearance: none;
  width: 86px;
  height: 16px;
  background: linear-gradient(#222, #222) center / 100% 1px no-repeat;

  &::-webkit-slider-thumb {
    appearance: none;
    width: 9px;
    height: 13px;
    border: 1px solid #333;
    background: linear-gradient(90deg, #ddd 3px, #666 3px 4px, #ddd 4px);
    clip-path: polygon(0 0, 100% 0, 100% 70%, 50% 100%, 0 70%);
  }
`;

const ZoomValue = styled.label`
  width: 33px;
`;

const CornerGrip = styled.span`
  align-self: flex-end;
  margin: 0 0 0 auto;
`;

/* ---------- data ---------- */

const tools = [
  { name: "Выбор", icon: <CursorIcon />, active: true },
  { name: "Текст", icon: <TextToolGlyph>A</TextToolGlyph> },
  { name: "Рисунок", icon: <PictureIcon /> },
  { name: "SVG", icon: <SvgGlyph>SVG</SvgGlyph> },
  { name: "Фигуры", icon: <ShapesIcon />, more: true },
  { name: "Подотчет", icon: <SubreportIcon /> },
  { name: "Таблица", icon: <TableIcon /> },
  { name: "Матрица", icon: <CrossTabIcon /> },
  { name: "Штрихкод", icon: <BarcodeIcon />, more: true },
  { name: "Флажок", icon: <CheckIcon /> },
  { name: "RichText", icon: <RichTextIcon /> },
  { name: "Диаграмма", icon: <ChartIcon /> },
  { name: "Спарклайн", icon: <SparkIcon /> },
  { name: "Индекс", icon: <DigitsIcon /> },
  { name: "Ячейки", icon: <RichTextIcon cells /> },
  { name: "Карта", icon: <GlobeIcon /> },
  { name: "Индикатор", icon: <GaugeIcon />, more: true },
];

const bands = [
  { title: "Заголовок отчета", height: 78, marks: [1, 2], text: true },
  { title: "Заголовок страницы", height: 60, marks: [1, ""] },
  { title: "Данные: Letters", height: 80, marks: [1, 2], active: true },
  { title: "Подвал", height: 24, marks: [] },
];

const dataTree = [
  { name: "Источники данных", icon: <DatabaseIcon /> },
  { name: "Системные переменные", icon: <VarGlyph>var</VarGlyph> },
  { name: "Итоги", icon: <SigmaIcon />, leaf: true },
  { name: "Параметры", icon: <ParamIcon /> },
  { name: "Функции", icon: <FxGlyph>f<small>x</small></FxGlyph> },
];

const properties = [
  { name: "Angle", value: "0" },
  { name: "Border", value: "(Border)", group: true },
  { name: "Cursor", value: "Default" },
  { name: "EvenStyle", value: "" },
  { name: "EvenStylePriority", value: "UseFill" },
  { name: "Fill", value: "Solid", group: true },
  { name: "FirstTabOffset", value: "0" },
  { name: "Font", value: "Arial; 10pt", group: true, selected: true },
  { name: "FontWidthRatio", value: "1" },
];

const handles = [[0, 0], [50, 0], [100, 0], [0, 50], [100, 50], [0, 100], [50, 100], [100, 100]];
const centimeters = [1, 2, 3, 4, 5, 6, 7, 8, 9, 10, 11, ""];

/* ---------- sections ---------- */

const MainToolbar = () => (
  <ToolbarRow>
    <Toolbar>
      <Grip $gap={3} />
      <ToolButton aria-label="Новый"><NewIcon /></ToolButton>
      <ToolButton aria-label="Удалить страницу"><DeletePageIcon /></ToolButton>
      <ToolButton aria-label="Настройки"><WrenchIcon /></ToolButton>
      <Separator />
      <ToolButton aria-label="Вырезать"><CutIcon /></ToolButton>
      <ToolButton aria-label="Копировать"><CopyIcon /></ToolButton>
      <ToolButton aria-label="Вставить"><PasteIcon /></ToolButton>
      <ToolButton aria-label="Формат по образцу"><BrushIcon /></ToolButton>
      <Separator />
      <ToolButton aria-label="Отменить"><UndoIcon /></ToolButton>
      <ToolButton $narrow aria-label="Список отмен"><DropArrow /></ToolButton>
      <ToolButton aria-label="Повторить"><RedoIcon /></ToolButton>
      <ToolButton $narrow aria-label="Список повторов"><DropArrow color="#7c8088" /></ToolButton>
      <Separator />
      <ToolButton aria-label="Группировать"><GroupIcon /></ToolButton>
      <ToolButton aria-label="Разгруппировать"><UngroupIcon /></ToolButton>
      <Overflow $dark aria-label="Еще">
        <Icon w={7} h={7}>
          <path d="M0 1h7M0 3h7l-3.500 4z" stroke="#fff" strokeWidth=".8" fill="#000" />
        </Icon>
      </Overflow>
    </Toolbar>
    <Toolbar $grow>
      <Grip $gap={5} />
      <SelectBox $width={120}>
        <select aria-label="Шрифт"><option>Arial</option></select>
        <DropArrow color="#777" />
      </SelectBox>
      <SelectBox $width={50}>
        <select aria-label="Размер"><option>10</option></select>
        <DropArrow color="#777" />
      </SelectBox>
      <ToolButton><Letter>B</Letter></ToolButton>
      <ToolButton><Letter $italic>I</Letter></ToolButton>
      <ToolButton><Letter $underline>U</Letter></ToolButton>
      <Separator />
      <ToolButton aria-label="По левому краю"><AlignIcon kind="left" /></ToolButton>
      <ToolButton $active aria-label="По центру"><AlignIcon kind="center" /></ToolButton>
      <ToolButton aria-label="По правому краю"><AlignIcon kind="right" /></ToolButton>
      <ToolButton aria-label="По ширине"><AlignIcon kind="full" /></ToolButton>
      <Separator />
      <ToolButton aria-label="По верху"><VerticalIcon /></ToolButton>
      <ToolButton $active aria-label="По середине"><VerticalIcon middle /></ToolButton>
      <Overflow aria-label="Еще">
        <Icon w={8} h={5}>
          <path d="M1 0l2.500 2.500L1 5M5 0l2.500 2.500L5 5" stroke="#000" strokeWidth="1.300" />
        </Icon>
        <DropArrow />
      </Overflow>
    </Toolbar>
  </ToolbarRow>
);

const Band = ({ band, index }) => (
  <EditorRow $height={band.height}>
    <BandHead $active={band.active}>{band.title}</BandHead>
    <SideRuler $first={index === 0}>
      {band.marks.map((n) => (
        <SideCell key={n}><span>{n}</span></SideCell>
      ))}
    </SideRuler>
    <BandSheet $first={index === 0}>
      <Dots aria-hidden="true">
        <defs>
          <pattern id={`dots${index}`} width="19" height="19" patternUnits="userSpaceOnUse">
            <path d="M0 0h1v1H0zM9 0h1v1H9zM0 9h1v1H0zM9 9h1v1H9z" fill="#bdbdbd" />
          </pattern>
        </defs>
        <rect width="100%" height="100%" fill={`url(#dots${index})`} />
      </Dots>
      {index > 0 && <Hatch />}
      {band.text && (
        <TextObject>
          Журнал регистрации исходящих документов
          {handles.map(([x, y]) => (
            <Handle key={`${x}-${y}`} $x={x} $y={y} />
          ))}
          <Callout $inset="-10px -15px -10px -16px">
            <Badge $top={-23} $right={-18}>3</Badge>
          </Callout>
        </TextObject>
      )}
    </BandSheet>
  </EditorRow>
);

const ReportEditor = () => (
  <Editor>
    <EditorRow $height={24}>
      <BuildLabel>Построить</BuildLabel>
      <SplitHandle><SplitIcon /></SplitHandle>
      <Ruler>
        {centimeters.map((n) => (
          <RulerCell key={n}><span>{n}</span></RulerCell>
        ))}
      </Ruler>
    </EditorRow>
    {bands.map((band, index) => (
      <Band key={band.title} band={band} index={index} />
    ))}
    <EditorRow $grow>
      <span />
      <span />
      <Backdrop />
    </EditorRow>
    <EditorRow $height={16}>
      <span />
      <span />
      <HScroll>
        <ScrollArrow dir="left" color="#aaa" />
        <HThumb><i /></HThumb>
        <ScrollArrow dir="right" color="#aaa" />
      </HScroll>
    </EditorRow>
    <TabStrip $height={26}>
      <Tab><CodeIcon />Код</Tab>
      <Tab $active><PageIcon />Page1</Tab>
    </TabStrip>
  </Editor>
);

const DataPane = () => (
  <section>
    <PaneHeader>Данные<PinIcon /></PaneHeader>
    <PaneToolbar $text>
      <ActionButton>Действия<DropArrow /></ActionButton>
      <ToolButton aria-label="Изменить"><EditIcon /></ToolButton>
      <ToolButton aria-label="Удалить"><CrossIcon /></ToolButton>
      <ToolButton aria-label="Просмотр"><LinkIcon /></ToolButton>
    </PaneToolbar>
    <Tree>
      {dataTree.map((item) => (
        <TreeItem key={item.name}>
          <Twist $leaf={item.leaf} aria-label={item.name} />
          <Leader />
          {item.icon}
          {item.name}
        </TreeItem>
      ))}
    </Tree>
    <TabStrip $height={28}>
      <Tab $active><DatabaseIcon />Данные</Tab>
      <Tab><TreeIcon />Дерево отчета</Tab>
    </TabStrip>
  </section>
);

const PropertiesPane = () => (
  <Properties>
    <PaneHeader>Свойства<PinIcon /></PaneHeader>
    <ObjectPicker>
      <label htmlFor="object">Text1</label>
      <select id="object"><option>TextObject</option></select>
      <PickerArrow><DropArrow /></PickerArrow>
    </ObjectPicker>
    <PaneToolbar>
      <ToolButton $active aria-label="По категориям"><CategoryIcon /></ToolButton>
      <ToolButton aria-label="По алфавиту"><SortIcon /></ToolButton>
      <Separator />
      <ToolButton $active aria-label="Свойства"><SheetIcon /></ToolButton>
      <ToolButton aria-label="События"><BoltIcon /></ToolButton>
    </PaneToolbar>
    <GridBox>
      <PropTable>
        <colgroup>
          <col width="21" />
          <col width="65" />
          <col />
        </colgroup>
        <tbody>
          <CategoryRow>
            <td><ExpandIcon open /></td>
            <th colSpan={2}>Внешний вид</th>
          </CategoryRow>
          {properties.map((p) => (
            <PropRow key={p.name} $selected={p.selected}>
              <td>{p.group && <ExpandIcon />}</td>
              <th>{p.name}</th>
              <td>{p.value}</td>
            </PropRow>
          ))}
        </tbody>
      </PropTable>
      <VScroll>
        <ScrollArrow dir="up" />
        <VThumb />
        <ScrollArrow dir="down" />
      </VScroll>
    </GridBox>
    <Description>Font</Description>
    <Callout $inset="0 24px 46px -1px">
      <Badge $top={-24} $right={-18}>4</Badge>
    </Callout>
  </Properties>
);

const Status = () => (
  <StatusBar>
    <StatusText><PositionIcon />1,25 см; 0,5 см</StatusText>
    <StatusText><PositionIcon size />9 см; 1,25 см</StatusText>
    <StatusObject>Text1:  Журнал регистрации исходящих документов</StatusObject>
    <StatusTools>
      <ViewGroup>
        <button aria-label="По ширине"><ViewIcon kind="width" /></button>
        <button aria-label="Страница"><ViewIcon kind="page" /></button>
        <button aria-label="Полный размер"><ViewIcon kind="full" /></button>
      </ViewGroup>
      <ZoomValue htmlFor="zoom">100%</ZoomValue>
      <button aria-label="Уменьшить"><ZoomIcon /></button>
      <ZoomRange id="zoom" type="range" min="0" max="200" defaultValue="100" />
      <button aria-label="Увеличить"><ZoomIcon plus /></button>
      <CornerGrip>
        <Icon w={11} h={11}>
          <path d="M8 0h2v2H8zM8 4h2v2H8zM8 8h2v2H8zM4 4h2v2H4zM4 8h2v2H4zM0 8h2v2H0z" fill="#333" />
        </Icon>
      </CornerGrip>
    </StatusTools>
  </StatusBar>
);

const App = () => {
  return (
    <Page>
      <GlobalStyle />
      <TitleBar>
        <TitleTab>OutgoingDocumentsReport [Отчет]*</TitleTab>
        <TitleTools>
          <Icon w={9} h={8}>
            <path d="M0 0h9v2H0zM0 4h9L4.500 8z" fill="#222" />
          </Icon>
          <Icon w={4} h={8}>
            <path d="M1 0l6 8M1 8l6-8" stroke="#222" strokeWidth="1.500" />
          </Icon>
        </TitleTools>
      </TitleBar>
      <Body>
        <Sidebar>
          <Panel>
            <ul>
              <NavItem><HomeIcon /><NavLink href="#report">OutgoingDocumentsReport</NavLink></NavItem>
              <NavItem><DesignerIcon /><NavLink href="#designer" $current>Дизайнер</NavLink></NavItem>
            </ul>
            <SideScroll>
              <SideScrollButton aria-label="Влево"><ScrollArrow dir="left" /></SideScrollButton>
              <SideThumb />
              <SideScrollButton aria-label="Вправо"><ScrollArrow dir="right" /></SideScrollButton>
            </SideScroll>
          </Panel>
          <EmptyPanel />
          <Callout $inset="22px 61px auto 7px" $height={28}>
            <Badge $top={-23} $right={-22}>1</Badge>
          </Callout>
        </Sidebar>
        <Designer>
          <MainToolbar />
          <Workspace>
            <Tools>
              {tools.map((tool) => [
                <Tool key={tool.name} $active={tool.active} aria-label={tool.name}>{tool.icon}</Tool>,
                tool.more && <ToolMore key={`${tool.name}-more`}><RightArrow /></ToolMore>,
              ])}
              <Callout $inset="24px -5px auto -4px" $height={30}>
                <Badge $top={-24} $right={-24}>2</Badge>
              </Callout>
            </Tools>
            <ReportEditor />
            <Panes>
              <DataPane />
              <PropertiesPane />
            </Panes>
          </Workspace>
          <Status />
        </Designer>
      </Body>
    </Page>
  );
};

export default App;
